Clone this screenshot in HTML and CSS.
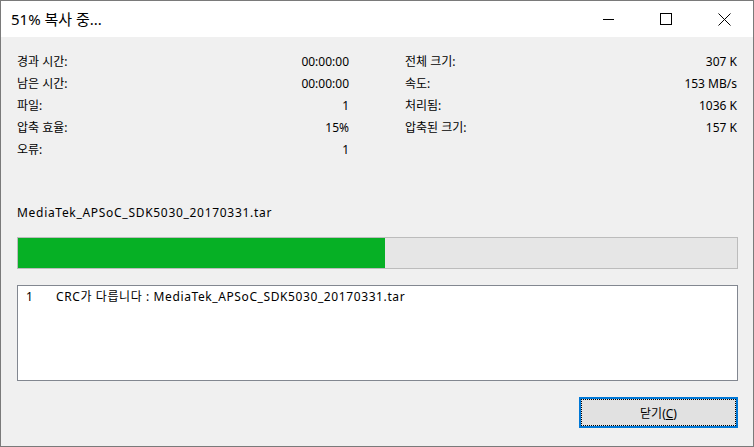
FILE: index.html
```html
<!DOCTYPE html>
<html lang="ko">
<head>
    <meta charset="UTF-8">
    <title>51% 복사 중...</title>
    <link rel="stylesheet" href="styles.css">
</head>
<body>
    <div class="window">
        <div class="titlebar">
            <span class="title">51% 복사 중...</span>
            <div class="caption-buttons">
                <span class="cap-btn">
                    <svg width="11" height="11" viewBox="0 0 11 11"><path d="M0 5.5h11" stroke="#000" stroke-width="1"/></svg>
                </span>
                <span class="cap-btn">
                    <svg width="12" height="12" viewBox="0 0 12 12"><rect x="0.5" y="0.5" width="11" height="11" fill="none" stroke="#000" stroke-width="1"/></svg>
                </span>
                <span class="cap-btn">
                    <svg width="13" height="13" viewBox="0 0 13 13"><path d="M0.5 0.5L12.5 12.5M12.5 0.5L0.5 12.5" stroke="#000" stroke-width="1"/></svg>
                </span>
            </div>
        </div>

        <div class="content">
            <div class="stats">
                <div class="stat-col">
                    <div class="stat-row"><span>경과 시간:</span><span>00:00:00</span></div>
                    <div class="stat-row"><span>남은 시간:</span><span>00:00:00</span></div>
                    <div class="stat-row"><span>파일:</span><span>1</span></div>
                    <div class="stat-row"><span>압축 효율:</span><span>15%</span></div>
                    <div class="stat-row"><span>오류:</span><span>1</span></div>
                </div>
                <div class="stat-col">
                    <div class="stat-row"><span>전체 크기:</span><span>307 K</span></div>
                    <div class="stat-row"><span>속도:</span><span>153 MB/s</span></div>
                    <div class="stat-row"><span>처리됨:</span><span>1036 K</span></div>
                    <div class="stat-row"><span>압축된 크기:</span><span>157 K</span></div>
                </div>
            </div>

            <div class="filename">MediaTek_APSoC_SDK5030_20170331.tar</div>

            <div class="progress">
                <div class="progress-fill" style="width: 51%"></div>
            </div>

            <div class="log-list">
                <div class="log-item">
                    <span class="log-num">1</span>
                    <span class="log-text">CRC가 다릅니다 : MediaTek_APSoC_SDK5030_20170331.tar</span>
                </div>
            </div>

            <div class="actions">
                <button class="btn">닫기(<u>C</u>)</button>
            </div>
        </div>
    </div>
</body>
</html>
```

FILE: styles.css
```css
body {
    margin: 0;
    font-family: "Noto Sans", "Noto Sans CJK KR", sans-serif;
    font-size: 12px;
    color: #000;
    background-color: #f0f0f0;
}

.window {
    width: 754px;
    height: 447px;
    box-sizing: border-box;
    border: 1px solid #7a7a7a;
    background-color: #f0f0f0;
    display: flex;
    flex-direction: column;
}

.titlebar {
    height: 36px;
    background-color: white;
    display: flex;
    align-items: center;
    justify-content: space-between;
}

.title {
    padding-left: 10px;
    font-size: 15px;
    padding-bottom: 2px;
}

.caption-buttons {
    display: flex;
    height: 100%;
}

.cap-btn {
    width: 58px;
    display: flex;
    align-items: center;
    justify-content: center;
}

.content {
    padding: 14px 15px 0 16px;
}

.stats {
    display: flex;
    gap: 56px;
    height: 151px;
}

.stat-col {
    width: 332px;
}

.stat-row {
    display: flex;
    justify-content: space-between;
    height: 22px;
    line-height: 22px;
}

.filename {
    height: 22px;
    line-height: 22px;
    letter-spacing: 0.7px;
}

.progress {
    margin-top: 13px;
    height: 30px;
    border: 1px solid #bcbcbc;
    background-color: #e6e6e6;
}

.progress-fill {
    height: 100%;
    background-color: #06b025;
}

.log-list {
    margin-top: 16px;
    height: 94px;
    border: 1px solid #828790;
    background-color: white;
}

.log-item {
    display: flex;
    line-height: 20px;
    padding-top: 1px;
}

.log-num {
    width: 38px;
    padding-left: 8px;
    box-sizing: border-box;
}

.log-text {
    letter-spacing: 0.6px;
}

.actions {
    display: flex;
    justify-content: flex-end;
    margin-top: 16px;
}

.btn {
    width: 159px;
    height: 31px;
    border: 2px solid #0078d7;
    background-color: #e1e1e1;
    font-family: "Noto Sans", "Noto Sans CJK KR", sans-serif;
    font-size: 12px;
    color: #000;
    outline: 1px dotted #000;
    outline-offset: -3px;
    padding: 0;
}
```
